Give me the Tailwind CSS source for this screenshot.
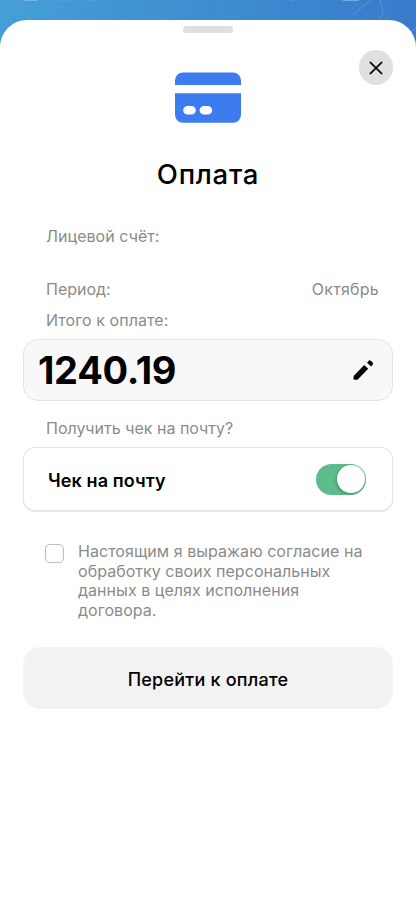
<!DOCTYPE html>
<html lang="ru">
<head>
<meta charset="utf-8">
<title>Оплата</title>
<script src="https://cdn.jsdelivr.net/npm/@tailwindcss/browser@4"></script>
</head>
<body class="h-[900px] w-[416px] overflow-hidden bg-linear-to-r from-[#459fd6] to-[#397bcb] font-[Inter,sans-serif] text-black">
<div class="relative h-[900px] pt-5">
  <svg class="absolute left-0 top-0" width="416" height="50" fill="none">
    <path d="M24 0h13M343 0h16" stroke="#8abfe5" stroke-width="1.6"/>
    <path d="M57 0h15M83 0h13M291 0h4" stroke="#55a3da"/>
    <path d="M380 0l3 12-1 4-5 3M353 15l18-15M411 32l5-4" stroke="#5598d8"/>
  </svg>
  <main class="relative flex h-[880px] flex-col rounded-t-[27px] bg-white px-[23px]">
    <div class="mt-[6px] h-[7px] w-[50px] shrink-0 self-center rounded-full bg-[#dfdfdf]"></div>
    <button aria-label="Закрыть" class="mt-[17px] flex h-[35px] w-[34px] shrink-0 items-center justify-center self-end rounded-full bg-[#e0e0e0]">
      <svg width="14" height="14" fill="none" stroke="#080808" stroke-width="1.7" stroke-linecap="round"><path d="M1.3 1.3l11.4 11.4M12.7 1.3L1.3 12.7"/></svg>
    </button>
    <svg class="-mt-[13px] shrink-0 self-center" width="66" height="51" fill="#3c7cee">
      <path d="M8 .5h50a8 8 0 0 1 8 8V13H0V8.500a8 8 0 0 1 8-8z"/>
      <path fill-rule="evenodd" d="M0 21.300h66v21.500a8 8 0 0 1-8 8H8a8 8 0 0 1-8-8zM12.500 34a4.300 4.300 0 0 0 0 8.600h4a4.300 4.300 0 0 0 0-8.600zM28.900 34a4.300 4.300 0 0 0 0 8.600h4a4.300 4.300 0 0 0 0-8.600z"/>
    </svg>
    <h1 class="mt-[33px] text-center text-[27.5px] font-medium leading-9 tracking-[0.75px]">Оплата</h1>
    <div class="mt-[34px] flex flex-col px-[23px] text-[16px] leading-5 text-[#8b8b8b]">
      <p class="tracking-[0.05px]">Лицевой счёт:</p>
      <div class="mt-[33px] flex justify-between"><span>Период:</span><span class="-mr-[9px] tracking-[0.25px]">Октябрь</span></div>
      <p class="mt-[11px] tracking-[0.07px]">Итого к оплате:</p>
    </div>
    <div class="mt-[9px] flex h-[62px] shrink-0 items-center justify-between rounded-[15px] border border-[#e3e3e3] bg-[#f8f8f8] pl-[14px] pr-[18px]">
      <span class="text-[38px] font-bold leading-none tracking-[-0.3px]">1240.19</span>
      <svg width="21" height="21" fill="#050505"><path d="M.6 15.900 11.200 4.900l4 3.900L4.500 19.800H.6zM14 2.700l1.700-1.900q1.100-.9 2.200 0l1.700 1.700q.9 1 0 2.200l-1.500 1.800z"/></svg>
    </div>
    <p class="mt-[17px] pl-[23px] text-[16px] leading-5 text-[#8b8b8b]">Получить чек на почту?</p>
    <div class="mt-[9px] flex h-[65px] shrink-0 items-center justify-between rounded-[12px] border border-b-2 border-[#e5e5e5] bg-white pl-6 pr-[26px]">
      <span class="relative top-[2px] text-[18px] font-semibold leading-6 tracking-[0.1px]">Чек на почту</span>
      <div role="switch" aria-checked="true" class="flex h-[31px] w-[50px] items-center justify-end rounded-full bg-[#5dbc89] pr-px"><span class="size-[28px] rounded-full bg-white shadow-[-1px_1px_3px_#0004]"></span></div>
    </div>
    <div class="mt-[29px] flex pl-[22px]">
      <span role="checkbox" aria-checked="false" class="mt-[3px] size-[19px] shrink-0 rounded-[5px] border border-[#bcbcbc]"></span>
      <p class="ml-[14px] mt-px whitespace-nowrap text-[16px] leading-[19.500px] tracking-[0.04px] text-[#8b8b8b]">Настоящим я выражаю согласие на<br>обработку своих персональных<br>данных в целях исполнения<br>договора.</p>
    </div>
    <button class="mt-[27px] h-[62px] shrink-0 rounded-[18px] bg-[#f2f2f2] pt-[2px] text-[18px] font-medium tracking-[0.22px]">Перейти к оплате</button>
  </main>
</div>
</body>
</html>
